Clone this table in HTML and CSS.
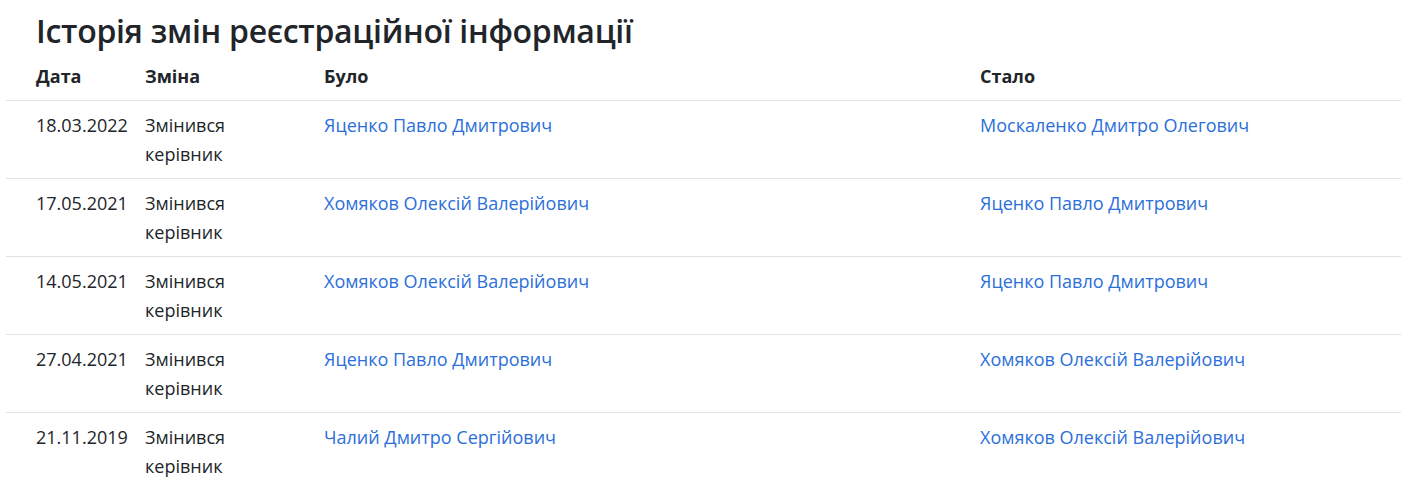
FILE: index.html
```html
<!DOCTYPE html>
<html lang="uk">
<head>
<meta charset="utf-8">
<link rel="stylesheet" href="styles.css">
</head>
<body>
<div class="page">
  <h2 class="title">Історія змін реєстраційної інформації</h2>
  <table class="history">
    <thead>
      <tr><th class="c-date">Дата</th><th class="c-change">Зміна</th><th class="c-was">Було</th><th>Стало</th></tr>
    </thead>
    <tbody>
      <tr><td class="c-date">18.03.2022</td><td class="c-change">Змінився керівник</td><td><a href="#">Яценко Павло Дмитрович</a></td><td><a href="#">Москаленко Дмитро Олегович</a></td></tr>
      <tr><td class="c-date">17.05.2021</td><td class="c-change">Змінився керівник</td><td><a href="#">Хомяков Олексій Валерійович</a></td><td><a href="#">Яценко Павло Дмитрович</a></td></tr>
      <tr><td class="c-date">14.05.2021</td><td class="c-change">Змінився керівник</td><td><a href="#">Хомяков Олексій Валерійович</a></td><td><a href="#">Яценко Павло Дмитрович</a></td></tr>
      <tr><td class="c-date">27.04.2021</td><td class="c-change">Змінився керівник</td><td><a href="#">Яценко Павло Дмитрович</a></td><td><a href="#">Хомяков Олексій Валерійович</a></td></tr>
      <tr><td class="c-date">21.11.2019</td><td class="c-change">Змінився керівник</td><td><a href="#">Чалий Дмитро Сергійович</a></td><td><a href="#">Хомяков Олексій Валерійович</a></td></tr>
    </tbody>
  </table>
</div>
</body>
</html>
```
FILE: styles.css
```css
* { box-sizing: border-box; }
html, body { margin: 0; background: #fff; }
body {
  font-family: "Open Sans", "Noto Sans", "Liberation Sans", sans-serif;
  font-size: 18px;
  color: #212529;
}
.page {
  padding: 12px 0 0 6px;
  width: 1401px;
}
.title {
  margin: 0 0 0 30px;
  font-size: 32px;
  font-weight: 600;
  line-height: 38px;
  letter-spacing: -0.3px;
}
.history {
  width: 1395px;
  border-collapse: collapse;
  table-layout: fixed;
}
.history th, .history td {
  text-align: left;
  vertical-align: top;
  padding: 10px 8px 9px;
  line-height: 29px;
  border-bottom: 1px solid #dee2e6;
}
.history th { font-weight: 700; padding-top: 12px; }
.history th:first-child, .history td:first-child { padding-left: 30px; }
.c-date { width: 131px; }
.c-change { width: 179px; }
td.c-change { padding-right: 30px; }
.c-was { width: 656px; }
.history a { color: #2b6fdb; text-decoration: none; }
```
